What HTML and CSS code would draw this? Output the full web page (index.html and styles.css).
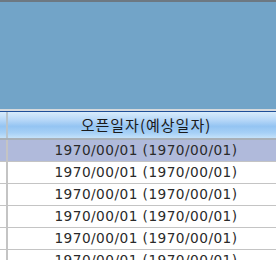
FILE: index.html
```html
<!DOCTYPE html>
<html>
<head>
<meta charset="utf-8">
<link rel="stylesheet" href="styles.css">
</head>
<body>
<div class="page">
  <div class="topband"></div>
  <div class="sky"></div>
  <div class="sep-light"></div>
  <div class="sep-dark"></div>
  <div class="grid">
    <div class="row header"><div class="stub"></div><div class="cell">오픈일자(예상일자)</div></div>
    <div class="row selected"><div class="stub"></div><div class="cell">1970/00/01 (1970/00/01)</div></div>
    <div class="row"><div class="stub"></div><div class="cell">1970/00/01 (1970/00/01)</div></div>
    <div class="row"><div class="stub"></div><div class="cell">1970/00/01 (1970/00/01)</div></div>
    <div class="row"><div class="stub"></div><div class="cell">1970/00/01 (1970/00/01)</div></div>
    <div class="row"><div class="stub"></div><div class="cell">1970/00/01 (1970/00/01)</div></div>
    <div class="row"><div class="stub"></div><div class="cell">1970/00/01 (1970/00/01)</div></div>
  </div>
</div>
</body>
</html>
```

FILE: styles.css
```css
html, body {
  margin: 0;
  padding: 0;
  background: #ffffff;
}
.page {
  width: 276px;
  height: 260px;
  overflow: hidden;
  display: flex;
  flex-direction: column;
}
.topband {
  height: 2px;
  flex: none;
  background: #6d7882;
}
.sky {
  height: 107px;
  flex: none;
  background: #72a4c8;
}
.sep-light {
  height: 2px;
  flex: none;
  background: #d6d9dc;
}
.sep-dark {
  height: 1px;
  flex: none;
  background: #1f4f98;
}
.grid {
  display: flex;
  flex-direction: column;
  width: 290px;
}
.row {
  display: flex;
  height: 21px;
  border-bottom: 1px solid #c4c4c4;
  flex: none;
}
.stub {
  width: 6px;
  flex: none;
  border-right: 2px solid #c4c4c4;
}
.cell {
  width: 276px;
  flex: none;
  text-align: center;
  font-family: "DejaVu Sans", sans-serif;
  font-size: 13.7px;
  letter-spacing: 0.45px;
  line-height: 21px;
  color: #2a2a2a;
}
.header {
  height: 26px;
  border-bottom: 2px solid #a8b0b8;
  background: linear-gradient(to bottom, #d8ecfc 0%, #b8d8f8 30%, #94c4f2 55%, #a6d0f6 80%, #c4e2fa 100%);
}
.header .stub {
  border-right-color: #b8c4cc;
}
.header .cell {
  line-height: 26px;
  font-family: "Noto Sans CJK KR", sans-serif;
  font-size: 15px;
  letter-spacing: 1px;
  color: #1a1a1a;
}
.selected {
  background: #b0badb;
}
```
